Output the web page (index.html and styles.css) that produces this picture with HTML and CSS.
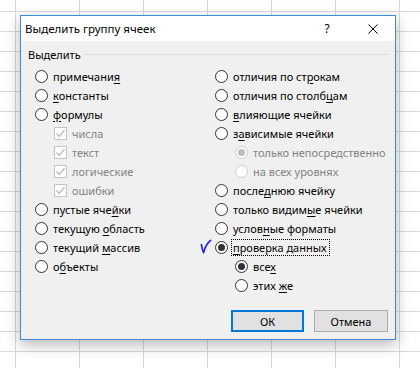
FILE: index.html
```html
<!DOCTYPE html>
<html lang="ru">
<head>
<meta charset="utf-8">
<title>Выделить группу ячеек</title>
<link rel="stylesheet" href="styles.css">
</head>
<body>
<div class="dialog">
  <div class="titlebar">
    <span class="title">Выделить группу ячеек</span>
    <span class="help">?</span>
    <span class="close"><svg width="10" height="10" viewBox="0 0 10 10"><path d="M0.5 0.5 L9.5 9.5 M9.5 0.5 L0.5 9.5" stroke="#000" stroke-width="1" fill="none"/></svg></span>
  </div>
  <div class="content">
    <div class="group-head"><span class="legend">Выделить</span><span class="rule"></span></div>
    <div class="cols">
      <div class="col col-left">
        <div class="row"><span class="radio"></span><span class="lbl">примечани<u>я</u></span></div>
        <div class="row"><span class="radio"></span><span class="lbl"><u>к</u>онстанты</span></div>
        <div class="row"><span class="radio"></span><span class="lbl"><u>ф</u>ормулы</span></div>
        <div class="row sub disabled"><span class="check"><svg width="11" height="11" viewBox="0 0 11 11"><path d="M1.5 5.5 L4.2 8.3 L9.6 2.2" stroke="#b4b4b4" stroke-width="1.2" fill="none"/></svg></span><span class="lbl">числа</span></div>
        <div class="row sub disabled"><span class="check"><svg width="11" height="11" viewBox="0 0 11 11"><path d="M1.5 5.5 L4.2 8.3 L9.6 2.2" stroke="#b4b4b4" stroke-width="1.2" fill="none"/></svg></span><span class="lbl">текст</span></div>
        <div class="row sub disabled"><span class="check"><svg width="11" height="11" viewBox="0 0 11 11"><path d="M1.5 5.5 L4.2 8.3 L9.6 2.2" stroke="#b4b4b4" stroke-width="1.2" fill="none"/></svg></span><span class="lbl">логические</span></div>
        <div class="row sub disabled"><span class="check"><svg width="11" height="11" viewBox="0 0 11 11"><path d="M1.5 5.5 L4.2 8.3 L9.6 2.2" stroke="#b4b4b4" stroke-width="1.2" fill="none"/></svg></span><span class="lbl">ошибки</span></div>
        <div class="row"><span class="radio"></span><span class="lbl">пустые яче<u>й</u>ки</span></div>
        <div class="row"><span class="radio"></span><span class="lbl">текущую <u>о</u>бласть</span></div>
        <div class="row"><span class="radio"></span><span class="lbl">текущий <u>м</u>ассив</span></div>
        <div class="row"><span class="radio"></span><span class="lbl">о<u>б</u>ъекты</span></div>
      </div>
      <div class="col col-right">
        <div class="row"><span class="radio"></span><span class="lbl">отличия по ст<u>р</u>окам</span></div>
        <div class="row"><span class="radio"></span><span class="lbl">отличия по столб<u>ц</u>ам</span></div>
        <div class="row"><span class="radio"></span><span class="lbl"><u>в</u>лияющие ячейки</span></div>
        <div class="row"><span class="radio"></span><span class="lbl">з<u>а</u>висимые ячейки</span></div>
        <div class="row sub2 disabled"><span class="radio on"></span><span class="lbl">только непосредственно</span></div>
        <div class="row sub2 disabled"><span class="radio"></span><span class="lbl">на всех уровнях</span></div>
        <div class="row"><span class="radio"></span><span class="lbl">после<u>д</u>нюю ячейку</span></div>
        <div class="row"><span class="radio"></span><span class="lbl">только видим<u>ы</u>е ячейки</span></div>
        <div class="row"><span class="radio"></span><span class="lbl">услов<u>н</u>ые форматы</span></div>
        <div class="row marked">
          <svg class="pen-check" width="12" height="15" viewBox="0 0 12 15"><path d="M1.4 5.6 C1.8 8.5 2.4 11.2 3.6 13.6 C4.6 9.6 6.6 4.6 10.6 1.4" stroke="#1f22e0" stroke-width="1.7" stroke-linecap="round" stroke-linejoin="round" fill="none"/></svg>
          <span class="radio on"></span><span class="lbl focus"><u>п</u>роверка данных</span>
        </div>
        <div class="row sub2"><span class="radio on"></span><span class="lbl">все<u>х</u></span></div>
        <div class="row sub2"><span class="radio"></span><span class="lbl">этих <u>ж</u>е</span></div>
      </div>
    </div>
    <div class="buttons">
      <button class="btn btn-default">ОК</button>
      <button class="btn btn-cancel">Отмена</button>
    </div>
  </div>
</div>
</body>
</html>
```

FILE: styles.css
```css
html, body {
  margin: 0;
  padding: 0;
}
body {
  width: 420px;
  height: 368px;
  overflow: hidden;
  background-color: #ffffff;
  background-image:
    linear-gradient(to bottom, #d9d9d9 1px, transparent 1px),
    linear-gradient(to right, #d9d9d9 1px, transparent 1px);
  background-size: 64px 20px, 64px 20px;
  background-position: 15px 11px, 15px 11px;
  font-family: "Noto Sans", "Open Sans", sans-serif;
  font-size: 11px;
  color: #000;
}
.dialog {
  box-sizing: border-box;
  width: 376px;
  height: 325px;
  margin: 15px 0 0 20px;
  border: 1px solid #3a8dd6;
  background: #f0f0f0;
  box-shadow: 0 5px 14px rgba(0, 0, 0, 0.28);
  display: flex;
  flex-direction: column;
}
.titlebar {
  height: 25px;
  background: #ffffff;
  display: flex;
  align-items: center;
  padding: 0 7px 0 4px;
  flex: none;
}
.title {
  font-size: 11.5px;
  margin-top: -1px;
}
.help {
  margin-left: auto;
  width: 22px;
  text-align: center;
  margin-right: 20px;
  font-size: 12px;
  margin-top: -1px;
}
.close {
  width: 30px;
  display: flex;
  justify-content: center;
  align-items: center;
}
.content {
  flex: 1;
  display: flex;
  flex-direction: column;
}
.group-head {
  margin-top: 6px;
  height: 16px;
  display: flex;
  align-items: center;
  padding: 0 7px 0 7px;
}
.legend {
  line-height: 16px;
}
.rule {
  flex: 1;
  height: 1px;
  background: #dcdcdc;
  margin-left: 3px;
  margin-top: -2px;
}
.cols {
  display: flex;
  margin-top: 4px;
}
.col-left {
  width: 194px;
  padding-left: 14px;
  box-sizing: border-box;
}
.col-right {
  flex: 1;
}
.row {
  height: 19px;
  display: flex;
  align-items: center;
  white-space: nowrap;
}
.row.sub {
  padding-left: 19px;
}
.row.sub2 {
  padding-left: 20px;
}
.row.marked {
  position: relative;
}
.pen-check {
  position: absolute;
  left: -15px;
  top: 1px;
}
.lbl {
  line-height: 15px;
}
.lbl u {
  text-decoration: underline;
  text-underline-offset: 2px;
}
.radio {
  box-sizing: border-box;
  width: 13px;
  height: 13px;
  border: 1px solid #333333;
  border-radius: 50%;
  background: #ffffff;
  margin-right: 5px;
  flex: none;
  position: relative;
}
.radio.on::after {
  content: "";
  position: absolute;
  left: 2px;
  top: 2px;
  width: 7px;
  height: 7px;
  border-radius: 50%;
  background: #333333;
}
.check {
  box-sizing: border-box;
  width: 13px;
  height: 13px;
  border: 1px solid #c4c4c4;
  background: #ffffff;
  margin-right: 5px;
  flex: none;
  display: flex;
  align-items: center;
  justify-content: center;
}
.disabled .lbl {
  color: #838383;
}
.disabled .radio {
  border-color: #cccccc;
}
.disabled .radio.on::after {
  background: #bcbcbc;
}
.focus {
  outline: 1px dotted #000;
  outline-offset: 0;
  padding: 0 2px 0 1px;
  margin-left: -1px;
}
.buttons {
  margin-top: 15px;
  display: flex;
  justify-content: flex-end;
  gap: 10px;
  padding-right: 7px;
}
.btn {
  box-sizing: border-box;
  height: 22px;
  background: #e1e1e1;
  font-family: "Noto Sans", "Open Sans", sans-serif;
  font-size: 11px;
  color: #000;
  padding: 0;
  margin: 0;
}
.btn-default {
  width: 73px;
  border: 2px solid #0078d7;
}
.btn-cancel {
  width: 74px;
  border: 1px solid #adadad;
}
```
